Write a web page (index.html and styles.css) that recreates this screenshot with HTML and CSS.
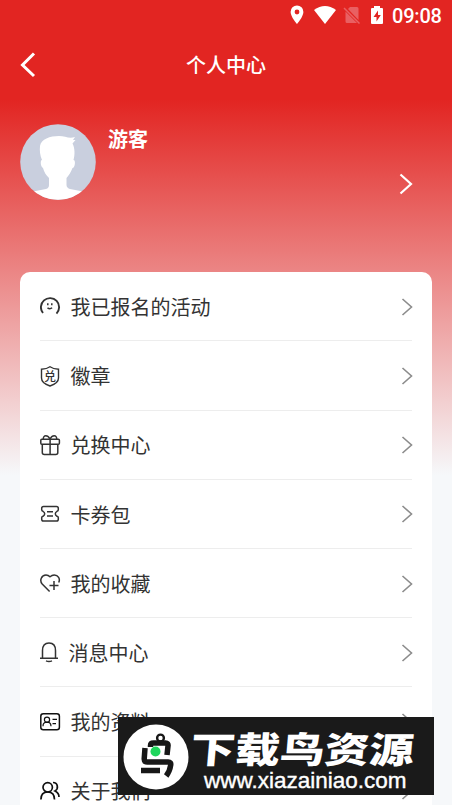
FILE: index.html
```html
<!DOCTYPE html>
<html lang="zh-CN">
<head>
<meta charset="utf-8">
<title>个人中心</title>
<link rel="stylesheet" href="styles.css">
</head>
<body>
<div class="screen">
  <div class="status">
    <svg class="pin" width="14" height="20" viewBox="0 0 14 20"><path fill="#fff" fill-rule="evenodd" d="M7 .5A6.4 6.4 0 0 0 .6 6.9C.6 11.6 7 19 7 19s6.400-7.400 6.400-12.100A6.400 6.400 0 0 0 7 .5ZM7 4.600a2.400 2.400 0 1 1 0 4.800 2.400 2.400 0 0 1 0-4.800Z"/></svg>
    <svg class="wifi" width="22" height="18" viewBox="0 0 22 18"><path fill="#fff" d="M0 4Q11-4 22 4L11 18Z"/></svg>
    <svg class="sim" width="18" height="18" viewBox="0 0 18 18"><path fill="#e96062" d="M7 1h7q1.500 0 1.500 1.500V14L5 3ZM2.500 5.500 14 17H4q-1.500 0-1.500-1.500Z"/><path d="M1 2 16.500 17.500" stroke="#e96062" stroke-width="1.500"/></svg>
    <svg class="battery" width="12" height="18" viewBox="0 0 12 18"><path fill="#fff" fill-rule="evenodd" d="M3 0h6v2h2q1 0 1 1v14q0 1-1 1H1q-1 0-1-1V3q0-1 1-1h2ZM7 4.500 2.500 11h3v4.500L9.800 9H7Z"/></svg>
    <span class="clock">09:08</span>
  </div>
  <header class="nav">
    <svg class="back" width="16" height="26" viewBox="0 0 16 26"><path d="M14 1.500 2.500 13 14 24" fill="none" stroke="#fff" stroke-width="3"/></svg>
    <h1>个人中心</h1>
  </header>
  <section class="profile">
    <svg class="avatar" width="76" height="76" viewBox="0 0 76 76">
      <clipPath id="round"><circle cx="38" cy="38" r="37.800"/></clipPath>
      <g clip-path="url(#round)"><path fill="#c9cfde" d="M0 0h76v76H0z"/><path fill="#fff" d="M20 22C21 15 30 12 39 12C45 12 49 15 55 13L53 16L55.500 16L52.500 19.500C55 24 55 31 53.500 36C56 36 55 44 52.500 44C51 48 49 51 46.500 54V61C46.500 63 48 64.500 50 65L63 67.500V76H13V67.500L26 65C28 64.500 29 63 29 61V54C26 51 24 48 23 44C20.500 43 20 36 22 36C20 31 19.500 27 20 22Z"/></g>
    </svg>
    <span class="name">游客</span>
    <svg class="go" width="14" height="22" viewBox="0 0 14 22"><path d="M1.500 1.500 12 11 1.500 20.500" fill="none" stroke="#fff" stroke-width="2.200"/></svg>
  </section>
  <main class="card">
    <div class="row"><svg class="icon" viewBox="0 0 22 22"><path d="M3 17A9.100 9.100 0 1 1 16.500 17.600" stroke-width="1.900"/><path d="M7.800 7.300v2M11.800 7.300v2M7.500 11.800q2.400 1.900 4.600 0" stroke-width="1.500"/></svg><span>我已报名的活动</span><svg class="chevron" viewBox="0 0 12 18"><path d="M1.500 1 10.500 9 1.500 17"/></svg></div>
    <div class="row"><svg class="icon" viewBox="0 0 22 22"><path d="M10 .8C7.500 2.600 5 3.100 1.500 3.200V12c0 4 4 6.500 8.500 8 4.500-1.500 8.500-4 8.500-8V3.200C15 3.100 12.500 2.600 10 .8Z" stroke-width="1.400"/><text x="4" y="14.700">兑</text></svg><span>徽章</span><svg class="chevron" viewBox="0 0 12 18"><path d="M1.500 1 10.500 9 1.500 17"/></svg></div>
    <div class="row"><svg class="icon" viewBox="0 0 22 22"><rect x=".8" y="4.300" width="18.600" height="5" rx="1"/><path d="M2.300 9.300V17.500q0 2 2 2h11.500q2 0 2-2V9.300M10.100 4.500v15M10 4.300C8-.5 3-.3 3.300 4.200M10 4.300C12-.5 17-.3 16.700 4.200"/></svg><span>兑换中心</span><svg class="chevron" viewBox="0 0 12 18"><path d="M1.500 1 10.500 9 1.500 17"/></svg></div>
    <div class="row"><svg class="icon" viewBox="0 0 22 22"><path d="M3.500 2.500h13q1.800 0 1.800 1.800v1.500q0 1.200-1.300 1.500-1.700 1-1.700 2.500t1.700 2.500q1.300.3 1.300 1.500v1.500q0 1.800-1.800 1.800h-13q-1.800 0-1.800-1.800v-1.500q0-1.200 1.300-1.500 1.700-1 1.700-2.500T3 7.300q-1.300-.3-1.300-1.500V4.300q0-1.800 1.800-1.800ZM7 7.700h6M7 12h6"/></svg><span>卡券包</span><svg class="chevron" viewBox="0 0 12 18"><path d="M1.500 1 10.500 9 1.500 17"/></svg></div>
    <div class="row"><svg class="icon" viewBox="0 0 22 22"><path d="M9.600 18.500 2.200 11C-.8 7.600 1.500 2 6 2q2.300 0 4 1.800Q12 2 14.200 2c4 0 6.300 4 4.500 7.500M14 8v9M9.500 12.500h9"/></svg><span>我的收藏</span><svg class="chevron" viewBox="0 0 12 18"><path d="M1.500 1 10.500 9 1.500 17"/></svg></div>
    <div class="row message"><svg class="icon" viewBox="0 0 22 22"><path d="M2.500 16V8.500C2.500 3.500 5 .9 9 .9S15.500 3.500 15.500 8.500V16M0 16.200h18M6 18.900q3 1.200 6 0"/></svg><span>消息中心</span><svg class="chevron" viewBox="0 0 12 18"><path d="M1.500 1 10.500 9 1.500 17"/></svg></div>
    <div class="row"><svg class="icon dark" viewBox="0 0 22 22"><rect x=".8" y="1.700" width="18.600" height="16" rx="2.500"/><g stroke-width="1.200"><circle cx="7" cy="7.700" r="2.600"/><path d="M3 14.200q0-4 4-4t4 4M12.500 7.400h4.500M12.500 11.700h3.500"/></g></svg><span>我的资料</span><svg class="chevron" viewBox="0 0 12 18"><path d="M1.500 1 10.500 9 1.500 17"/></svg></div>
    <div class="row"><svg class="icon dark" viewBox="0 0 22 22"><g stroke-width="1.700"><circle cx="7.700" cy="6.300" r="4.700"/><path d="M.9 18.500q0-7.500 6.800-7.500t6.800 7.500M13 1.500c5 0 5.800 6.500 2 8.500 2.500 1.200 4 3 4 6"/></g></svg><span>关于我们</span><svg class="chevron" viewBox="0 0 12 18"><path d="M1.500 1 10.500 9 1.500 17"/></svg></div>
  </main>
</div>
<aside class="banner">
  <svg class="bird" width="66" height="66" viewBox="0 0 66 66"><circle cx="33" cy="33" r="32.500" fill="#fff"/><g fill="none" stroke="#171717"><circle cx="37.500" cy="14" r="3.400" stroke-width="2.400"/><path stroke-width="5.500" d="M27.500 23v-1.500q0-2.500 3-2.500h12q3 0 2.500 3L44 31M22 24l-.8 11q0 3 3 3h21q3 0 2.500 3-.8 6-4.500 11M18 46.500h19"/></g><circle cx="32.500" cy="27.500" r="5" fill="#1fd65c"/></svg>
  <div class="brand"><strong>下载鸟资源</strong><span>www.xiazainiao.com</span></div>
</aside>
</body>
</html>
```

FILE: styles.css
```css
* { box-sizing: border-box; }
body { margin: 0; height: 805px; overflow: hidden; font-family: "Noto Sans CJK SC", sans-serif; color: #333; }
.screen { height: 805px; overflow: hidden; background: linear-gradient(#e22522 0, #e22522 100px, #f6f8fa 475px); }
svg { display: block; flex: none; }
.status { height: 32px; display: flex; align-items: center; padding: 0 10px 2px 290px; color: #fff; }
.wifi { margin-left: 10px; }
.sim { margin-left: 7px; }
.battery { margin-left: 10px; }
.clock { margin-left: 9px; padding-top: 2px; font: 500 20px/30px Roboto, sans-serif; letter-spacing: -.2px; }
.nav { height: 66px; display: grid; grid-template-columns: 16px 1fr 16px; align-items: center; padding: 0 20px; color: #fff; }
.nav h1 { margin: 0; text-align: center; font-size: 20px; line-height: 30px; font-weight: 500; }
.profile { height: 174px; display: flex; align-items: flex-start; padding: 26px 39px 0 20px; color: #fff; }
.name { margin: 1px 0 0 12px; font-size: 20px; line-height: 28px; font-weight: 700; }
.go { margin: 49px 0 0 auto; }
.card { margin: 0 20px; padding: .3px 20px 0; background: #fff; border-radius: 10px 10px 0 0; }
.row { height: 69.2px; display: flex; align-items: center; border-bottom: 1px solid #ededed; font-size: 20px; line-height: 30px; }
.row > span { margin-left: 8.5px; padding-top: 1.2px; }
.message > span { margin-left: 6.5px; }
.icon { width: 22px; height: 22px; margin-top: 2px; fill: none; stroke: #333; stroke-width: 1.5; }
.icon text { font-size: 12px; font-weight: 500; fill: #333; stroke: none; }
.dark { stroke: #111; }
.chevron { width: 12px; height: 18px; margin: 1px -1px 0 auto; fill: none; stroke: #8c8c8c; stroke-width: 1.6; }
.banner { position: absolute; left: 118px; top: 717px; width: 316px; height: 78px; display: flex; padding: 7px 5px; background: #1a1a1a; color: #fff; overflow: hidden; }
.brand { display: flex; flex-direction: column; margin-left: 2px; }
.brand strong { font-size: 36px; line-height: 46px; font-weight: 900; white-space: nowrap; transform: scaleX(1.24) skewX(-4deg); transform-origin: 0 50%; }
.brand span { margin: -1px 0 0 13px; font: 22.5px/24px "Liberation Sans", sans-serif; -webkit-text-stroke: .4px #fff; }
```
